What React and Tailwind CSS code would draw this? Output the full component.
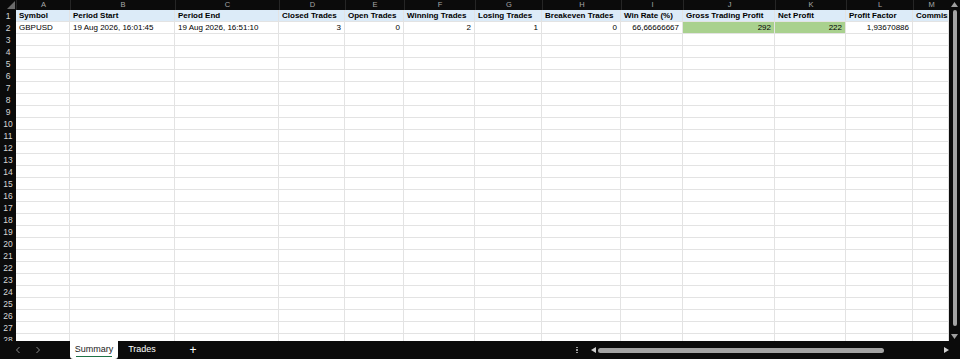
import React from 'react';

const cols = [
  { key: 'A', w: 54 },
  { key: 'B', w: 105 },
  { key: 'C', w: 104 },
  { key: 'D', w: 66 },
  { key: 'E', w: 59 },
  { key: 'F', w: 71 },
  { key: 'G', w: 67 },
  { key: 'H', w: 79 },
  { key: 'I', w: 62 },
  { key: 'J', w: 92 },
  { key: 'K', w: 71 },
  { key: 'L', w: 67 },
  { key: 'M', w: 36 },
];

const headers = [
  'Symbol',
  'Period Start',
  'Period End',
  'Closed Trades',
  'Open Trades',
  'Winning Trades',
  'Losing Trades',
  'Breakeven Trades',
  'Win Rate (%)',
  'Gross Trading Profit',
  'Net Profit',
  'Profit Factor',
  'Commission',
];

// [value, align, green]
const dataRow = [
  ['GBPUSD', 'left'],
  ['19 Aug 2026, 16:01:45', 'left'],
  ['19 Aug 2026, 16:51:10', 'left'],
  ['3', 'right'],
  ['0', 'right'],
  ['2', 'right'],
  ['1', 'right'],
  ['0', 'right'],
  ['66,66666667', 'right'],
  ['292', 'right', true],
  ['222', 'right', true],
  ['1,93670886', 'right'],
  ['', 'left'],
];

const gridCols = { gridTemplateColumns: `16px ${cols.map((c) => c.w + 'px').join(' ')}` };

function RowNum({ n }) {
  return (
    <div className="h-[12px] bg-[#0b0b0b] text-[#d6d6d6] text-[8.5px] leading-[12px] text-center">{n}</div>
  );
}

function Cell({ children, align = 'left', className = '' }) {
  return (
    <div
      className={`h-[12px] border-r border-b border-[#e3e3e3] px-[3px] text-[8px] leading-[11px] whitespace-nowrap overflow-hidden ${
        align === 'right' ? 'text-right' : 'text-left'
      } ${className}`}
    >
      {children}
    </div>
  );
}

function Sheet() {
  const emptyRows = [];
  for (let r = 3; r <= 28; r++) emptyRows.push(r);
  return (
    <div className="w-[949px] h-[341px] overflow-hidden bg-white">
      {/* column letters */}
      <div className="grid h-[10px] bg-[#0b0b0b]" style={gridCols}>
        <div className="relative h-[10px]">
          <svg className="absolute right-[1px] bottom-[1px]" width="8" height="8" viewBox="0 0 8 8">
            <polygon points="8,0 8,8 0,8" fill="#6b6b6b" />
          </svg>
        </div>
        {cols.map((c) => (
          <div
            key={c.key}
            className="h-[10px] border-l border-[#262626] text-[#a8a8a8] text-[7.5px] leading-[10px] text-center"
          >
            {c.key}
          </div>
        ))}
      </div>
      {/* header row */}
      <div className="grid" style={gridCols}>
        <RowNum n={1} />
        {headers.map((h) => (
          <Cell key={h} className="bg-[#dcebf8] font-bold text-black">
            {h}
          </Cell>
        ))}
      </div>
      {/* data row */}
      <div className="grid" style={gridCols}>
        <RowNum n={2} />
        {dataRow.map(([v, a, g], i) => (
          <Cell key={i} align={a} className={`${g ? 'bg-[#a9d18e]' : 'bg-white'} text-black`}>
            {v}
          </Cell>
        ))}
      </div>
      {emptyRows.map((r) => (
        <div key={r} className="grid" style={gridCols}>
          <RowNum n={r} />
          {cols.map((c) => (
            <Cell key={c.key} />
          ))}
        </div>
      ))}
    </div>
  );
}

function VScroll() {
  return (
    <div className="w-[11px] h-[341px] bg-[#0b0b0b] flex flex-col items-center pt-[2px]">
      <svg width="7" height="5" viewBox="0 0 7 5">
        <polygon points="3.5,0 7,5 0,5" fill="#a0a0a0" />
      </svg>
      <div className="w-[4px] h-[316px] mt-[3px] rounded-full bg-[#a3a3a3]" />
      <svg className="mt-[8px]" width="7" height="5" viewBox="0 0 7 5">
        <polygon points="0,0 7,0 3.5,5" fill="#a0a0a0" />
      </svg>
    </div>
  );
}

function TabBar() {
  return (
    <div className="h-[18px] bg-[#0b0b0b] flex items-stretch text-[9px]">
      <div className="w-[70px] flex items-center pl-[15px] gap-[14px] text-[#8a8a8a]">
        <svg width="6" height="8" viewBox="0 0 6 8">
          <polyline points="4.5,1 1.5,4 4.5,7" fill="none" stroke="#8a8a8a" strokeWidth="1" />
        </svg>
        <svg width="6" height="8" viewBox="0 0 6 8">
          <polyline points="1.5,1 4.5,4 1.5,7" fill="none" stroke="#8a8a8a" strokeWidth="1" />
        </svg>
      </div>
      <div className="w-[48px] bg-white rounded-b-[3px] flex flex-col items-center justify-center">
        <span className="text-[#1a1a1a] leading-[11px]">Summary</span>
        <div className="w-[36px] h-[1px] bg-[#1e7145] mt-[1px]" />
      </div>
      <div className="w-[48px] flex items-center justify-center text-white">Trades</div>
      <div className="w-[54px] flex items-center justify-center text-white text-[12px] font-light">+</div>
      <div className="flex-1" />
      <div className="w-[16px] flex flex-col items-center justify-center gap-[1px]">
        <div className="w-[1.5px] h-[1.5px] bg-[#9a9a9a]" />
        <div className="w-[1.5px] h-[1.5px] bg-[#9a9a9a]" />
        <div className="w-[1.5px] h-[1.5px] bg-[#9a9a9a]" />
      </div>
      <div className="w-[375px] flex items-center pl-[6px] pr-[11px]">
        <svg width="5" height="6" viewBox="0 0 5 6">
          <polygon points="0,3 5,0 5,6" fill="#cfcfcf" />
        </svg>
        <div className="w-[286px] h-[5px] ml-[2px] rounded-full bg-[#a3a3a3]" />
        <div className="flex-1" />
        <svg width="5" height="6" viewBox="0 0 5 6">
          <polygon points="0,0 5,3 0,6" fill="#cfcfcf" />
        </svg>
      </div>
    </div>
  );
}

export default function App() {
  return (
    <div className="w-[960px] h-[359px] overflow-hidden bg-[#0b0b0b] font-['Liberation_Sans',Arial,sans-serif]">
      <div className="flex">
        <Sheet />
        <VScroll />
      </div>
      <TabBar />
    </div>
  );
}
